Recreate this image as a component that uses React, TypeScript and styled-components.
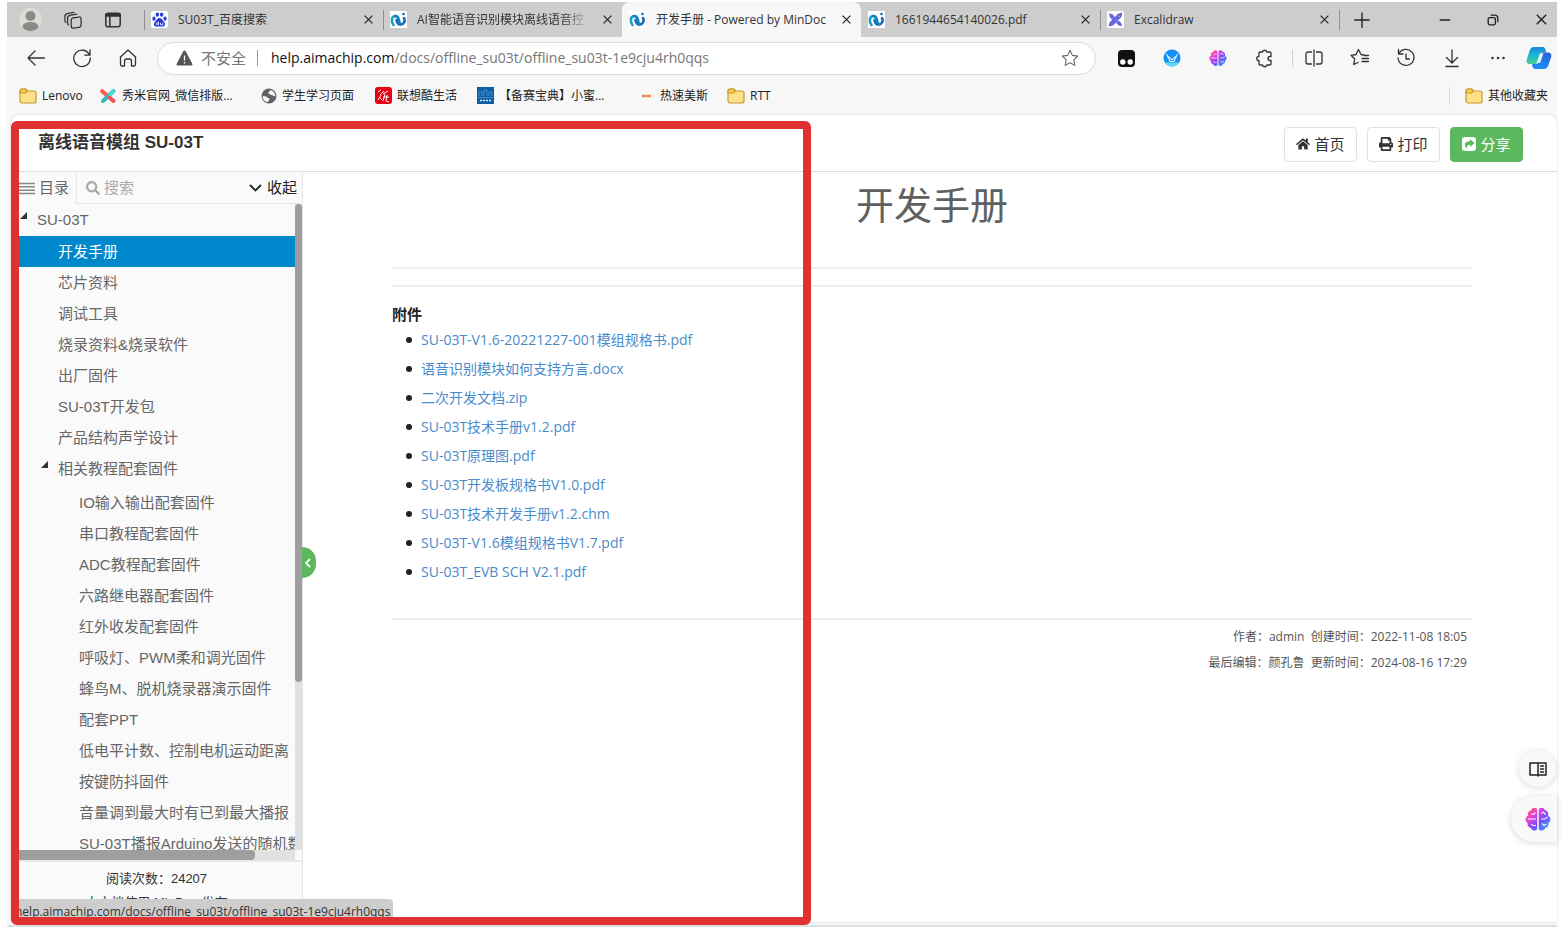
import React from 'react';
import styled, { createGlobalStyle, css } from 'styled-components';
import { FaHome, FaPrint, FaSearch } from 'react-icons/fa';

const UI = '"Open Sans", "Noto Sans CJK SC", sans-serif';
const ARIAL = '"Liberation Sans", "Noto Sans CJK SC", sans-serif';

const GlobalStyle = createGlobalStyle`
  *, *::before, *::after { box-sizing: border-box; }
  body { margin: 0; background: #fff; overflow: hidden; }
  button { border: 0; background: none; padding: 0; margin: 0; font: inherit; color: inherit; cursor: pointer; }
  ul { list-style: none; margin: 0; padding: 0; }
  svg { display: block; flex: none; }
`;

/* ---------- window ---------- */

const Page = styled.div`
  height: 100vh;
  padding: 2px 5px 6px 7px;
  font-family: ${UI};
  font-size: 13px;
  line-height: 20px;
  color: #333;
`;

const Window = styled.div`
  position: relative;
  height: 100%;
  display: flex;
  flex-direction: column;
  background: #f7f7f7;
  border-bottom: 2px solid #dcdfe1;
`;

const TabBar = styled.div`
  display: flex;
  flex: none;
  height: 35px;
  background: #cdcdcd;
`;

const TabTools = styled.div`
  display: flex;
  align-items: center;
  flex: none;
  width: 137px;
  padding-left: 12px;
  gap: 22px;
`;

const Avatar = styled.button`
  width: 23px;
  height: 23px;
  border-radius: 50%;
  overflow: hidden;
  background: #dedcd9;
`;

const Tab = styled.div<{ $active?: boolean; $divided?: boolean }>`
  position: relative;
  display: flex;
  align-items: center;
  flex: 0 1 239px;
  min-width: 0;
  padding: 0 8px 0 7px;
  gap: 10px;
  color: #333;
  ${p => p.$active && css`
    background: #f7f7f7;
    border-radius: 8px 8px 0 0;
  `}
  ${p => p.$divided && css`
    &::before {
      content: '';
      position: absolute;
      left: 0;
      top: 8px;
      width: 1px;
      height: 20px;
      background: #8f8f8f;
    }
  `}
`;

const TabTitle = styled.a<{ $fade?: boolean }>`
  flex: 1;
  min-width: 0;
  overflow: hidden;
  white-space: nowrap;
  font-size: 12px;
  color: inherit;
  text-decoration: none;
  ${p => p.$fade && css`
    mask-image: linear-gradient(to right, #000 84%, transparent);
  `}
`;

const CloseButton = styled.button`
  display: flex;
  align-items: center;
  justify-content: center;
  flex: none;
  width: 14px;
  height: 20px;
  color: #222;
`;

const NewTab = styled(CloseButton)`
  position: relative;
  align-self: center;
  width: 46px;
  &::before {
    content: '';
    position: absolute;
    left: 0;
    top: 0;
    width: 1px;
    height: 20px;
    background: #8f8f8f;
  }
`;

const WindowControls = styled.div`
  display: flex;
  align-items: center;
  margin-left: auto;
`;

const ControlButton = styled(CloseButton)`
  width: 48px;
  &:last-child {
    width: 40px;
    padding-left: 8px;
  }
`;

const Toolbar = styled.div`
  display: flex;
  align-items: center;
  flex: none;
  height: 42px;
  padding-left: 6px;
  color: #333;
`;

const ToolButton = styled.button<{ $wide?: number }>`
  display: flex;
  align-items: center;
  justify-content: center;
  flex: none;
  width: ${p => p.$wide ?? 46}px;
  height: 32px;
`;

const Address = styled.div`
  display: flex;
  align-items: center;
  flex: 1;
  min-width: 0;
  height: 33px;
  margin: 0 7px 0 6px;
  padding: 0 16px 0 18px;
  border: 1px solid #dadada;
  border-radius: 17px;
  background: #fff;
`;

const Insecure = styled.button`
  display: flex;
  align-items: center;
  gap: 8px;
  padding-right: 11px;
  margin-right: 13px;
  border-right: 1px solid #999;
  height: 16px;
  font-size: 15px;
  line-height: 16px;
  color: #767676;
`;

const Url = styled.span`
  flex: 1;
  min-width: 0;
  overflow: hidden;
  white-space: nowrap;
  font-size: 14px;
  color: #777;
  b { font-weight: 400; color: #111; }
`;

const ToolDivider = styled.span`
  width: 1px;
  height: 17px;
  margin: 0 -2px 0 5px;
  background: #d0d0d0;
`;

const Bookmarks = styled.nav`
  display: flex;
  align-items: center;
  flex: none;
  height: 33px;
  padding-left: 12px;
`;

const Bookmark = styled.a<{ $width?: number }>`
  display: flex;
  align-items: center;
  flex: none;
  gap: 5px;
  width: ${p => (p.$width ? `${p.$width}px` : 'auto')};
  white-space: nowrap;
  font-size: 12px;
  color: #222;
  text-decoration: none;
`;

const OtherBookmarks = styled.div`
  margin-left: auto;
  padding: 0 9px 0 15px;
  border-left: 1px solid #dedede;
  height: 18px;
  line-height: 18px;
  display: flex;
  align-items: center;
`;

/* ---------- page ---------- */

const Card = styled.main`
  display: flex;
  flex-direction: column;
  flex: 1;
  min-height: 0;
  margin: 3px 0 3px 4px;
  border-radius: 8px 8px 0 0;
  background: #fff;
  overflow: hidden;
  box-shadow: 0 0 2px rgba(0, 0, 0, 0.18);
`;

const Header = styled.header`
  display: flex;
  align-items: center;
  justify-content: space-between;
  flex: none;
  height: 57px;
  padding: 0 34px 0 27px;
  border-bottom: 1px solid #ddd;
`;

const BookTitle = styled.h1`
  margin: 0;
  font: 700 17px/24px ${ARIAL};
  color: #333;
`;

const Actions = styled.div`
  display: flex;
  gap: 10px;
  padding-top: 2px;
`;

const Action = styled.button<{ $primary?: boolean }>`
  display: flex;
  align-items: center;
  justify-content: center;
  gap: 4px;
  width: 73px;
  height: 35px;
  border: 1px solid ${p => (p.$primary ? '#5cb85c' : '#e0e0e0')};
  border-radius: 4px;
  background: ${p => (p.$primary ? '#5cb85c' : '#fff')};
  font-size: 15px;
  color: ${p => (p.$primary ? '#fff' : '#333')};
`;

const Body = styled.div`
  display: flex;
  flex: 1;
  min-height: 0;
`;

const Sidebar = styled.aside`
  position: relative;
  display: flex;
  flex-direction: column;
  flex: none;
  width: 292px;
  border-right: 1px solid #e4e4e4;
  background: #fafafa;
  font-family: ${ARIAL};
`;

const SideHead = styled.div`
  display: flex;
  flex: none;
  height: 32px;
  font-size: 15px;
`;

const CatalogTab = styled.button`
  display: flex;
  align-items: center;
  gap: 4px;
  width: 66px;
  padding-left: 8px;
  border-right: 1px solid #e6e6e6;
  color: #666;
`;

const SearchBox = styled.label`
  display: flex;
  align-items: center;
  flex: 1;
  min-width: 0;
  gap: 4px;
  padding: 0 5px 0 9px;
  border-bottom: 1px solid #e6e6e6;
  color: #aaa;
`;

const SearchInput = styled.input`
  flex: 1;
  min-width: 0;
  padding: 0;
  border: 0;
  outline: 0;
  background: transparent;
  font: 15px/20px ${ARIAL};
  color: #333;
  &::placeholder { color: #aaa; }
`;

const Collapse = styled.button`
  display: flex;
  align-items: center;
  gap: 5px;
  color: #222;
`;

const SideBody = styled.div`
  display: grid;
  grid-template: minmax(0, 1fr) 10px / minmax(0, 1fr) 7px;
  flex: 1;
  min-height: 0;
`;

const Tree = styled.nav`
  overflow: hidden;
`;

const SubTree = styled.ul<{ $gap: number }>`
  margin-top: ${p => p.$gap}px;
`;

const Node = styled.a<{ $level: number; $active?: boolean }>`
  display: flex;
  align-items: center;
  height: 31px;
  padding-left: ${p => 9 + p.$level * 21}px;
  white-space: nowrap;
  font-size: 15px;
  text-decoration: none;
  color: ${p => (p.$active ? '#fff' : '#666')};
  background: ${p => (p.$active ? '#0088cc' : 'transparent')};
`;

const Caret = styled.span`
  flex: none;
  width: 17px;
  padding-bottom: 8px;
`;

const Track = styled.div<{ $horizontal?: boolean }>`
  background: #e1e1e1;
  &::before {
    content: '';
    display: block;
    width: ${p => (p.$horizontal ? '86%' : '100%')};
    height: ${p => (p.$horizontal ? '100%' : '74%')};
    border-radius: 4px;
    background: #9e9e9e;
  }
`;

const SideFoot = styled.footer`
  flex: none;
  height: 62px;
  padding-top: 5px;
  border-top: 2px solid #e8e8e8;
  overflow: hidden;
  text-align: center;
  font-size: 13px;
  line-height: 24px;
  color: #333;
`;

const Toggle = styled.button`
  position: absolute;
  left: 291px;
  top: 375px;
  display: flex;
  align-items: center;
  justify-content: center;
  width: 14px;
  height: 31px;
  padding-right: 3px;
  border-radius: 0 16px 16px 0;
  background: #5cb85c;
  color: #fff;
`;

const Article = styled.article`
  flex: 1;
  min-width: 0;
  padding: 0 85px 0 89px;
`;

const Heading = styled.h2`
  margin: 0;
  padding: 5px 0 36px;
  font-weight: 400;
  font-size: 38px;
  line-height: 54px;
  text-align: center;
  color: #606060;
`;

const Rule = styled.hr<{ $tight?: boolean }>`
  height: 0;
  margin: 0 0 ${p => (p.$tight ? 4 : 16)}px;
  border: 0;
  border-top: 2px solid #eee;
`;

const FilesTitle = styled.h3`
  margin: 0;
  font-size: 15px;
  line-height: 22px;
  color: #222;
`;

const Files = styled.ul`
  margin-bottom: 32px;
  font-size: 14px;
  line-height: 29px;
`;

const File = styled.li`
  display: flex;
  align-items: center;
  gap: 9px;
  padding-left: 14px;
  &::before {
    content: '';
    width: 6px;
    height: 6px;
    border-radius: 50%;
    background: #222;
  }
`;

const FileLink = styled.a`
  color: #4a8bca;
  text-decoration: none;
`;

const Meta = styled.div`
  padding-right: 5px;
  text-align: right;
  font-size: 12px;
  line-height: 26px;
  white-space: pre;
  color: #555;
`;

/* ---------- overlays ---------- */

const StatusBubble = styled.div`
  position: absolute;
  left: 4px;
  bottom: 3px;
  width: 382px;
  height: 23px;
  padding-left: 4px;
  border-radius: 0 4px 0 0;
  background: #cdcdcd;
  font-size: 12px;
  line-height: 25px;
  white-space: nowrap;
  color: #333;
`;

const Frame = styled.div`
  position: absolute;
  left: 4px;
  top: 119px;
  bottom: 0;
  width: 800px;
  border: 8px solid #e03131;
  border-radius: 6px;
  pointer-events: none;
`;

const Floating = styled.button<{ $pill?: boolean }>`
  position: absolute;
  right: ${p => (p.$pill ? 0 : 1)}px;
  bottom: ${p => (p.$pill ? 83 : 138)}px;
  display: flex;
  align-items: center;
  justify-content: center;
  width: ${p => (p.$pill ? 46 : 37)}px;
  height: ${p => (p.$pill ? 46 : 37)}px;
  padding-left: ${p => (p.$pill ? 8 : 0)}px;
  border-radius: ${p => (p.$pill ? '23px 0 0 23px' : '50%')};
  background: #f9f9f9;
  box-shadow: 0 1px 6px rgba(0, 0, 0, 0.16);
  color: #222;
`;

/* ---------- icons ---------- */

type LineProps = { size?: number; w?: number; children: React.ReactNode };
const Line = ({ size = 20, w = 1.3, children }: LineProps) => (
  <svg width={size} height={size} viewBox="0 0 20 20" fill="none" stroke="currentColor" strokeWidth={w} strokeLinecap="round" strokeLinejoin="round" aria-hidden="true">
    {children}
  </svg>
);

const CloseIcon = ({ size = 9 }: { size?: number }) => (
  <svg width={size} height={size} viewBox="0 0 10 10" fill="none" stroke="currentColor" strokeWidth="1.3" aria-hidden="true">
    <path d="M.7.7l8.6 8.6M9.3.7L.7 9.3" />
  </svg>
);

const BaiduIcon = () => (
  <svg width="17" height="17" viewBox="0 0 16 16" aria-hidden="true">
    <rect width="16" height="16" rx="2" fill="#fff" />
    <g fill="#2a35e0">
      <ellipse cx="2.8" cy="7.2" rx="1.5" ry="2" />
      <ellipse cx="6" cy="3.4" rx="1.6" ry="2.1" />
      <ellipse cx="10" cy="3.4" rx="1.6" ry="2.1" />
      <ellipse cx="13.2" cy="7.2" rx="1.5" ry="2" />
      <path d="M8 6.6c2 0 2.500 1.900 4 3.200 1.700 1.400 1.800 4.700-1 4.900-1 .1-1.700-.2-3-.2s-2 .3-3 .2c-2.800-.2-2.700-3.500-1-4.900 1.500-1.300 2-3.200 4-3.200z" />
    </g>
    <path d="M7 10v3H5.800a.8.8 0 010-1.700H7M9 11v2h2.200v-2" fill="none" stroke="#fff" strokeWidth=".8" />
  </svg>
);

const WaveIcon = () => (
  <svg width="17" height="17" viewBox="0 0 17 17" fill="none" strokeLinecap="round" aria-hidden="true">
    <rect width="17" height="17" fill="#fff" />
    <path d="M3.500 14C1 11 1.200 5.500 5 5c2.600-.3 3.400 2 4 4.200" stroke="#1aa0c8" strokeWidth="2.600" />
    <path d="M6.500 9c.6 2.700 1.500 4.800 4.200 4.500C14.500 13 15.500 9.500 14 7" stroke="#1768b5" strokeWidth="2.600" />
    <path d="M5 5c2.800-.3 3.500 2.200 4 4.500.4 1.800 1 3 2 3.800" stroke="#1583c4" strokeWidth="2.400" />
    <circle cx="13.500" cy="3" r="1.300" fill="#1768b5" />
  </svg>
);

const ExcalidrawIcon = () => (
  <svg width="17" height="17" viewBox="0 0 17 17" fill="#6965db" aria-hidden="true">
    <rect width="17" height="17" rx="2" fill="#fff" />
    <path d="M15.300 1.500l-.8 4.500-8.500 8.500-3.500 1-.8-.9 1-3.400L11 2.800z" />
    <path d="M2 2.200l3.500 1L8 6.500 5.500 9 2.700 6zM11.500 9.500l2.500 2.300 1.200 3.400-3.500-.8L9 11.800z" />
    <path d="M11.500 4.800l.8.8" stroke="#fff" strokeWidth="1" />
  </svg>
);

const FolderIcon = () => (
  <svg width="18" height="16" viewBox="0 0 18 16" fill="#ffe08a" stroke="#c79a2b" strokeWidth="1.200" strokeLinejoin="round" aria-hidden="true">
    <path d="M1 3a2 2 0 012-2h3.500l2 2H15a2 2 0 012 2v8a2 2 0 01-2 2H3a2 2 0 01-2-2z" />
    <path d="M1 3a2 2 0 012-2h3.500l2 2-2 2H1z" fill="#f8c94c" />
  </svg>
);

const XiumiIcon = () => (
  <svg width="18" height="16" viewBox="0 0 18 16" strokeLinecap="round" strokeWidth="4" fill="none" aria-hidden="true">
    <path d="M3 3l5 4.500" stroke="#ff5b4c" />
    <path d="M14.500 3L4 13" stroke="#2cbdbf" />
    <path d="M10.500 9.500l4 3.500" stroke="#f0525d" />
    <path d="M14.500 3l-3 3" stroke="#58d4d0" />
  </svg>
);

const GlobeIcon = () => (
  <svg width="16" height="16" viewBox="0 0 16 16" aria-hidden="true">
    <circle cx="8" cy="8" r="7.500" fill="#5f6368" />
    <path d="M1.500 8.300C3 8 5 8 6 9.200c1 1 2.500.6 2.500 2.200 0 1.300-1.700 1.200-2 2.900C3.500 13.700 1.700 11.400 1.500 8.300zM9.500 2c-.2 1.700-2 1.500-2.200 2.700-.1 1.200 1.400 1 2 1.700.7 1 2.200.3 3 1.100.6.7 1.300.9 2 .8C14.300 5 12.300 2.600 9.500 2z" fill="#f7f7f7" />
  </svg>
);

const RedIcon = () => (
  <svg width="17" height="17" viewBox="0 0 17 17" aria-hidden="true">
    <rect width="17" height="17" rx="3" fill="#e60012" />
    <path d="M3 5l3-2M5 8l4-4M3 13l3-5M8 7l5-3M8 10h6M10 7l-2 7M12 8l-1 6 3 1M4 10l3 3" stroke="#fff" strokeWidth="1" fill="none" />
  </svg>
);

const BlueIcon = () => (
  <svg width="17" height="17" viewBox="0 0 17 17" fill="none" aria-hidden="true">
    <rect width="17" height="17" fill="#0b5ea8" />
    <path d="M2 9V5h3v4M7 9V3h3v6M12 9V5h3v4M1 10.500h15" stroke="#5ba0d8" strokeWidth=".7" />
    <path d="M3 13.500h11" stroke="#dcebf8" strokeWidth="1.500" strokeDasharray="2 1" />
  </svg>
);

const DashIcon = () => (
  <svg width="17" height="16" viewBox="0 0 17 16" aria-hidden="true">
    <path d="M4 8h4.300M8.700 8H13" stroke="#f08650" strokeWidth="2.400" />
  </svg>
);

const BrainIcon = ({ size = 17, id }: { size?: number; id: string }) => (
  <svg width={size} height={size} viewBox="0 0 24 24" aria-hidden="true">
    <defs>
      <linearGradient id={id} x1="0" y1="0" x2="1" y2="1">
        <stop offset="0" stopColor="#ff8a1f" />
        <stop offset=".28" stopColor="#ee3fd0" />
        <stop offset=".6" stopColor="#7b4dff" />
        <stop offset="1" stopColor="#16b8ff" />
      </linearGradient>
    </defs>
    <path fill={`url(#${id})`} d="M11.300 3.500C10.500 1 6.500 1 5.500 4 3 4.500 2 7 2.800 9-.2 10.500-.2 14 2.300 15.500 2 18 3.500 20 5.500 20.300c1 3 5 3.200 5.800.7zM12.700 3.500c.8-2.500 4.800-2.500 5.800.5 2.500.5 3.500 3 2.700 5 3 1.500 3 5 .5 6.500.3 2.500-1.200 4.500-3.200 4.800-1 3-5 3.200-5.800.7z" />
    <path d="M2.500 12H10M6 7.500c1.500.5 3-.3 3.500-1.500M6 17c1 1.200 2.500 1.200 4 .8M15 7l2-1.500L19 8M15 12h3l3-2M15.500 16l2 2 2.500-1.500" fill="none" stroke="#fff" strokeWidth="1" />
  </svg>
);

const CopilotIcon = () => (
  <svg width="26" height="24" viewBox="0 0 26 24" aria-hidden="true">
    <defs>
      <linearGradient id="cpa" x1="0" y1="0" x2="0" y2="1">
        <stop offset="0" stopColor="#1a86d8" />
        <stop offset=".5" stopColor="#18b7d6" />
        <stop offset="1" stopColor="#49cf8c" />
      </linearGradient>
      <linearGradient id="cpb" x1="0" y1="0" x2="0" y2="1">
        <stop offset="0" stopColor="#2a62d9" />
        <stop offset="1" stopColor="#1c8df5" />
      </linearGradient>
    </defs>
    <path d="M8.500 1h8c2 0 2.600 1.300 3.100 3l.7 2.500h-3.800c-2 0-2.700 1-3.300 3l-2 6.500c-.5 1.600-1.300 2-3 2H4c-2.600 0-4-1.500-3.200-4.500L3.500 5C4.300 2.300 5.800 1 8.500 1z" fill="url(#cpa)" />
    <path d="M17.500 23h-8c-2 0-2.600-1.300-3.100-3L6 18h3.500c2 0 2.700-1 3.300-3l2-6.500c.5-1.600 1.300-2 3-2H22c2.600 0 4 1.500 3.200 4.500L22.500 19c-.8 2.700-2.300 4-5 4z" fill="url(#cpb)" />
    <path d="M14.500 7.500h3l-3.500 9.500h-3.500z" fill="#e9f6ff" />
  </svg>
);

const ShareIcon = () => (
  <svg width="14" height="14" viewBox="0 0 14 14" aria-hidden="true">
    <rect width="14" height="14" rx="3" fill="#fff" />
    <path d="M8 2L12.500 6 8 10V7.700C5.500 7.500 4.500 8.500 5.200 11.500 1.300 8.800 2.300 4.400 8 4.300z" fill="#5cb85c" />
  </svg>
);

const CaretIcon = () => (
  <svg width="7" height="7" viewBox="0 0 7 7" aria-hidden="true"><path d="M7 0v7H0z" fill="#333" /></svg>
);

const ListIcon = () => (
  <svg width="16" height="13" viewBox="0 0 16 13" stroke="#888" strokeWidth="1.600" aria-hidden="true">
    <path d="M0 1.500h16M0 4.800h16M0 8.200h16M0 11.500h16" />
  </svg>
);

/* ---------- data ---------- */

const tabs = [
  { title: 'SU03T_百度搜索', icon: <BaiduIcon />, divided: true },
  { title: 'AI智能语音识别模块离线语音控', icon: <WaveIcon />, divided: true, fade: true },
  { title: '开发手册 - Powered by MinDoc', icon: <WaveIcon />, active: true },
  { title: '1661944654140026.pdf', icon: <WaveIcon /> },
  { title: 'Excalidraw', icon: <ExcalidrawIcon />, divided: true },
];

const bookmarks = [
  { label: 'Lenovo', icon: <FolderIcon />, width: 80 },
  { label: '秀米官网_微信排版...', icon: <XiumiIcon />, width: 162 },
  { label: '学生学习页面', icon: <GlobeIcon />, width: 114 },
  { label: '联想酷生活', icon: <RedIcon />, width: 102 },
  { label: '【备赛宝典】小蜜...', icon: <BlueIcon />, width: 161 },
  { label: '热速美斯', icon: <DashIcon />, width: 89 },
  { label: 'RTT', icon: <FolderIcon /> },
];

const chapters = ['开发手册', '芯片资料', '调试工具', '烧录资料&烧录软件', '出厂固件', 'SU-03T开发包', '产品结构声学设计'];

const firmware = [
  'IO输入输出配套固件',
  '串口教程配套固件',
  'ADC教程配套固件',
  '六路继电器配套固件',
  '红外收发配套固件',
  '呼吸灯、PWM柔和调光固件',
  '蜂鸟M、脱机烧录器演示固件',
  '配套PPT',
  '低电平计数、控制电机运动距离',
  '按键防抖固件',
  '音量调到最大时有已到最大播报',
  'SU-03T播报Arduino发送的随机数',
];

const files = [
  'SU-03T-V1.6-20221227-001模组规格书.pdf',
  '语音识别模块如何支持方言.docx',
  '二次开发文档.zip',
  'SU-03T技术手册v1.2.pdf',
  'SU-03T原理图.pdf',
  'SU-03T开发板规格书V1.0.pdf',
  'SU-03T技术开发手册v1.2.chm',
  'SU-03T-V1.6模组规格书V1.7.pdf',
  'SU-03T_EVB SCH V2.1.pdf',
];

/* ---------- parts ---------- */

const BrowserTabs = () => (
  <TabBar>
    <TabTools>
      <Avatar aria-label="Profile">
        <svg width="23" height="23" viewBox="0 0 23 23" fill="#8d8a86"><circle cx="11.500" cy="8" r="5" /><ellipse cx="11.500" cy="18.500" rx="8" ry="4.500" /></svg>
      </Avatar>
      <button aria-label="Workspaces">
        <Line size={18} w={1.4}>
          <rect x="8" y="7" width="11" height="11.500" rx="2.500" transform="skewY(-8) translate(0 2)" />
          <path d="M5 15.500c-.8-.5-1-1-1-2V8C4 6 5 5.200 6.500 4.900L14 3.500M2 12.500c-.8-.6-1-1.200-1-2.200V6C1 4.300 2 3.300 3.500 3L11 1.500" />
        </Line>
      </button>
      <button aria-label="Tab actions">
        <Line size={18} w={1.7}>
          <rect x="2" y="2.500" width="16" height="15" rx="2.500" />
          <path d="M3 4.500h14" strokeWidth="4" />
          <path d="M6.500 6v11" />
        </Line>
      </button>
    </TabTools>
    {tabs.map(t => (
      <Tab key={t.title} $active={t.active} $divided={t.divided}>
        {t.icon}
        <TabTitle href="#" $fade={t.fade}>{t.title}</TabTitle>
        <CloseButton aria-label="Close tab"><CloseIcon /></CloseButton>
      </Tab>
    ))}
    <NewTab aria-label="New tab">
      <Line size={18} w={1.5}><path d="M10 2v16M2 10h16" /></Line>
    </NewTab>
    <WindowControls>
      <ControlButton aria-label="Minimize"><Line size={12} w={2.2}><path d="M2 10h16" /></Line></ControlButton>
      <ControlButton aria-label="Restore">
        <Line size={12} w={2.2}><rect x="2" y="6" width="12" height="12" rx="2.500" /><path d="M7 2h6c3 0 5 2 5 5v6" /></Line>
      </ControlButton>
      <ControlButton aria-label="Close"><CloseIcon size={11} /></ControlButton>
    </WindowControls>
  </TabBar>
);

const BrowserToolbar = () => (
  <Toolbar>
    <ToolButton aria-label="Back"><Line><path d="M18.500 10H2M9 3l-7 7 7 7" /></Line></ToolButton>
    <ToolButton aria-label="Refresh"><Line><path d="M17.500 7A8.200 8.200 0 1018.200 10M18 2v5.200h-5.200" /></Line></ToolButton>
    <ToolButton aria-label="Home"><Line><path d="M2.500 9L10 2l7.500 7v7.500a1.500 1.500 0 01-1.500 1.500h-2.500V13a2 2 0 00-2-2h-3a2 2 0 00-2 2v5H4a1.500 1.500 0 01-1.500-1.500z" /></Line></ToolButton>
    <Address>
      <Insecure>
        <svg width="17" height="16" viewBox="0 0 17 16" aria-hidden="true">
          <path d="M8.500.5c.5 0 .9.200 1.200.7l6.600 12.500c.5 1-.1 1.800-1.100 1.800H1.800c-1 0-1.600-.8-1.100-1.800L7.300 1.200c.3-.5.7-.7 1.200-.7z" fill="#555" />
          <path d="M8.500 5.500v5M8.500 12v1.500" stroke="#fff" strokeWidth="1.300" />
        </svg>
        不安全
      </Insecure>
      <Url><b>help.aimachip.com</b>/docs/offline_su03t/offline_su03t-1e9cju4rh0qqs</Url>
      <button aria-label="Add to favorites">
        <Line size={18} w={1.2}><path d="M10 1.500l2.600 5.600 6 .8-4.400 4.200 1.100 6.100L10 15.300l-5.300 2.900 1.100-6.100L1.400 7.900l6-.8z" stroke="#666" /></Line>
      </button>
    </Address>
    <ToolButton aria-label="Tampermonkey">
      <svg width="17" height="17" viewBox="0 0 17 17"><rect width="17" height="17" rx="4" fill="#111" /><circle cx="4.800" cy="12" r="2.700" fill="#fff" /><circle cx="12.200" cy="12" r="2.700" fill="#fff" /></svg>
    </ToolButton>
    <ToolButton aria-label="Downloader">
      <svg width="18" height="18" viewBox="0 0 18 18"><circle cx="9" cy="9" r="8.500" fill="#1690f5" /><path d="M2 13.500h14C14 17 11.500 17.500 9 17.500S4 17 2 13.500z" fill="#60d9f5" /><path d="M3.500 5L7 12.500h4L14.500 5M5.500 7.500L9 11l3.500-3.500" fill="none" stroke="#d9f2ff" strokeWidth="1.100" /></svg>
    </ToolButton>
    <ToolButton aria-label="Assistant"><BrainIcon size={18} id="brain-small" /></ToolButton>
    <ToolButton aria-label="Extensions">
      <Line><path d="M6 4h2.500a2.200 2.200 0 014.300 0H16a1 1 0 011 1v3.500h-1a2 2 0 000 4h1V16a1 1 0 01-1 1h-3.200a2.200 2.200 0 01-4.300 0H6a1 1 0 01-1-1v-3.300a2.200 2.200 0 010-4.400V5a1 1 0 011-1z" /></Line>
    </ToolButton>
    <ToolDivider />
    <ToolButton aria-label="Split screen"><Line><path d="M7.500 4H4a2 2 0 00-2 2v8a2 2 0 002 2h3.500M12.500 4H16a2 2 0 012 2v8a2 2 0 01-2 2h-3.500M10 2v16" /></Line></ToolButton>
    <ToolButton aria-label="Favorites"><Line><path d="M14 7l-3-.5L8.500 1.500 6 6.500l-5 .8 3.700 3.700-1 5.500L8 14.500M12 10.500h6.500M12 13.500h6.500M14 7.500h4.500" /></Line></ToolButton>
    <ToolButton aria-label="History"><Line><path d="M3 5.500A8 8 0 112 10M2.500 1.500v4.500H7M10 6v5h3.500" /></Line></ToolButton>
    <ToolButton aria-label="Downloads"><Line><path d="M10 2v12.500M4.500 9.500l5.500 5.500 5.500-5.500M4 18.500h12" /></Line></ToolButton>
    <ToolButton aria-label="Settings and more">
      <Line><g fill="currentColor" stroke="none"><circle cx="4.500" cy="10" r="1.300" /><circle cx="10" cy="10" r="1.300" /><circle cx="15.500" cy="10" r="1.300" /></g></Line>
    </ToolButton>
    <ToolButton $wide={36} aria-label="Copilot"><CopilotIcon /></ToolButton>
  </Toolbar>
);

const SideNav = () => (
  <Sidebar>
    <SideHead>
      <CatalogTab><ListIcon />目录</CatalogTab>
      <SearchBox>
        <FaSearch size={14} />
        <SearchInput placeholder="搜索" aria-label="搜索" />
        <Collapse>
          <svg width="13" height="8" viewBox="0 0 13 8" fill="none" stroke="currentColor" strokeWidth="1.800"><path d="M1 1l5.500 5.500L12 1" /></svg>
          收起
        </Collapse>
      </SearchBox>
    </SideHead>
    <SideBody>
      <Tree>
        <Node href="#" $level={0}><Caret><CaretIcon /></Caret>SU-03T</Node>
        <SubTree $gap={1}>
          {chapters.map((c, i) => (
            <li key={c}><Node href="#" $level={1} $active={i === 0}><Caret />{c}</Node></li>
          ))}
          <li>
            <Node href="#" $level={1}><Caret><CaretIcon /></Caret>相关教程配套固件</Node>
            <SubTree $gap={3}>
              {firmware.map(f => (
                <li key={f}><Node href="#" $level={2}><Caret />{f}</Node></li>
              ))}
            </SubTree>
          </li>
        </SubTree>
      </Tree>
      <Track />
      <Track $horizontal />
    </SideBody>
    <SideFoot>
      <div>阅读次数：24207</div>
      <div>本文档使用 MinDoc 发布</div>
    </SideFoot>
    <Toggle aria-label="Hide catalog">
      <svg width="7" height="10" viewBox="0 0 7 10" fill="none" stroke="currentColor" strokeWidth="1.800"><path d="M6 1L2 5l4 4" /></svg>
    </Toggle>
  </Sidebar>
);

export default function App() {
  return (
    <Page>
      <GlobalStyle />
      <Window>
        <BrowserTabs />
        <BrowserToolbar />
        <Bookmarks>
          {bookmarks.map(b => (
            <Bookmark key={b.label} href="#" $width={b.width}>{b.icon}{b.label}</Bookmark>
          ))}
          <OtherBookmarks><Bookmark href="#"><FolderIcon />其他收藏夹</Bookmark></OtherBookmarks>
        </Bookmarks>
        <Card>
          <Header>
            <BookTitle>离线语音模组 SU-03T</BookTitle>
            <Actions>
              <Action><FaHome size={14} />首页</Action>
              <Action><FaPrint size={14} />打印</Action>
              <Action $primary><ShareIcon />分享</Action>
            </Actions>
          </Header>
          <Body>
            <SideNav />
            <Article>
              <Heading>开发手册</Heading>
              <Rule />
              <Rule />
              <FilesTitle>附件</FilesTitle>
              <Files>
                {files.map(f => <File key={f}><FileLink href="#">{f}</FileLink></File>)}
              </Files>
              <Rule $tight />
              <Meta>作者：admin  创建时间：2022-11-08 18:05</Meta>
              <Meta>最后编辑：颜孔鲁  更新时间：2024-08-16 17:29</Meta>
            </Article>
          </Body>
        </Card>
        <StatusBubble>help.aimachip.com/docs/offline_su03t/offline_su03t-1e9cju4rh0qqs</StatusBubble>
        <Floating aria-label="Reading mode">
          <Line size={20} w={1.5}><path d="M10 4v13M10 4H2v12h8M10 4h8v12h-8M12.500 7h3M12.500 10h3M12.500 13h3" /></Line>
        </Floating>
        <Floating $pill aria-label="Assistant"><BrainIcon size={26} id="brain-large" /></Floating>
        <Frame aria-hidden="true" />
      </Window>
    </Page>
  );
}
